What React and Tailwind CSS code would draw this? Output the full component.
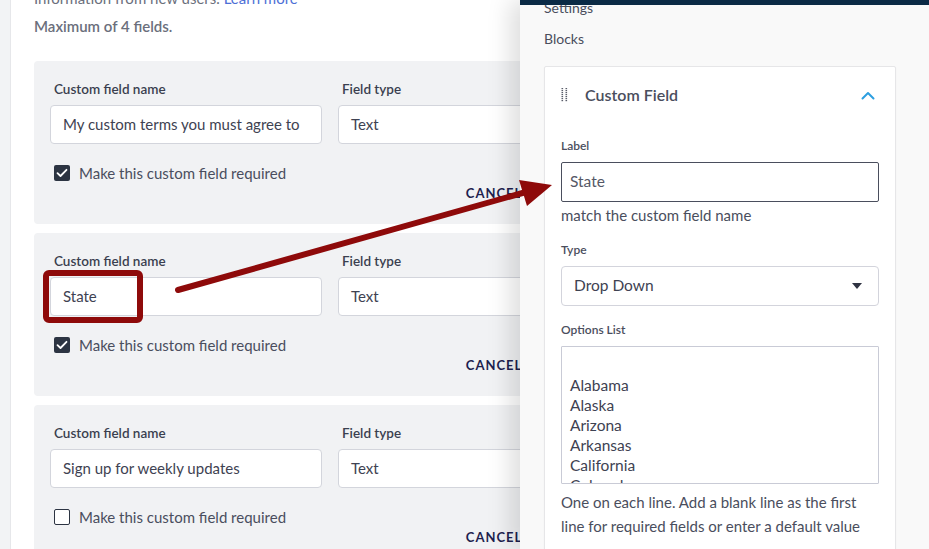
import React from "react";

function Check() {
  return (
    <svg width="12" height="10" viewBox="0 0 12 10" fill="none">
      <path d="M1.5 5.2 L4.5 8 L10.5 1.8" stroke="white" strokeWidth="1.8" strokeLinecap="round" strokeLinejoin="round" />
    </svg>
  );
}

function FieldBox({ name, checked }) {
  return (
    <div className="h-[163px] w-[600px] shrink-0 rounded-[4px] bg-[#f1f2f4] pl-4 pr-5 pt-[20px]">
      <div className="grid grid-cols-[272px_1fr] gap-x-[16px]">
        <div className="pl-1 text-[13.5px] font-semibold leading-4 text-[#3a3f4f]">Custom field name</div>
        <div className="pl-1 text-[13.5px] font-semibold leading-4 text-[#3a3f4f]">Field type</div>
        <div className="mt-2 flex h-[39px] items-center rounded-[4px] border border-[#d3d5dc] bg-white px-[12px] text-[15px] text-[#3e4252]">{name}</div>
        <div className="mt-2 flex h-[39px] items-center rounded-[4px] border border-[#d3d5dc] bg-white px-[12px] text-[15px] text-[#3e4252]">Text</div>
      </div>
      <div className="mt-[17px] flex h-6 items-center gap-[9px] pl-1">
        {checked ? (
          <div className="flex h-4 w-4 items-center justify-center rounded-[2px] bg-[#2c3442]"><Check /></div>
        ) : (
          <div className="h-4 w-4 rounded-[2px] border-[1.5px] border-[#2c3442] bg-white" />
        )}
        <span className="text-[15px] text-[#4a4e5e]">Make this custom field required</span>
      </div>
      <div className="flex items-start justify-end gap-6">
        <span className="text-[13px] font-bold leading-4 tracking-[1px] text-[#1e1f4f]">CANCEL</span>
        <span className="-mt-2 rounded-[4px] bg-[#1e1f4f] px-4 py-2 text-[13px] font-bold leading-4 tracking-[1px] text-white">SAVE</span>
      </div>
    </div>
  );
}

export default function App() {
  return (
    <div className="relative flex h-[549px] w-[929px] overflow-hidden bg-white font-['Lato',sans-serif]">
      {/* Left pane */}
      <div className="flex w-[520px] shrink-0 overflow-hidden bg-[#f2f3f5] pl-[10px]">
        <div className="flex min-w-0 flex-1 flex-col border-l border-[#e6e7ea] bg-white pl-[23px]">
          <div className="-mt-[12px] whitespace-nowrap text-[15px] leading-5 text-[#6b6f7c]">
            Information from new users. <span className="text-[#4d6fd6]">Learn more</span>
          </div>
          <div className="mt-[8px] text-[15px] font-semibold leading-5 text-[#6b6f7c]">Maximum of 4 fields.</div>
          <div className="mt-[25px] flex flex-col gap-[9px]">
            <FieldBox name="My custom terms you must agree to" checked />
            <FieldBox name="State" checked />
            <FieldBox name="Sign up for weekly updates" checked={false} />
          </div>
        </div>
      </div>

      {/* Right panel */}
      <div className="relative z-10 flex w-[409px] shrink-0 flex-col overflow-hidden bg-[#f9f9f9] shadow-[-10px_0_22px_rgba(0,0,0,0.13)]">
        <div className="relative z-10 h-[5px] shrink-0 bg-[#0b2a45]" />
        <div className="-mt-[7px] shrink-0 pl-6 pr-[33px]">
          <div className="text-[14px] leading-5 text-[#4a4e5d]">Settings</div>
          <div className="mt-[11px] text-[14px] leading-5 text-[#4a4e5d]">Blocks</div>
          <div className="mt-[17px] rounded-[2px] border border-[#e6e6e8] bg-white px-4 pb-8 shadow-[0_1px_2px_rgba(0,0,0,0.04)]">
            <div className="flex h-[56px] items-center">
              <svg width="8" height="15" viewBox="0 0 8 15">
                {[0, 1, 2, 3, 4, 5, 6].map((i) => (
                  <g key={i}>
                    <rect x="0.5" y={i * 2} width="1.6" height="1.2" fill="#5a5e6b" />
                    <rect x="4.5" y={i * 2} width="1.6" height="1.2" fill="#5a5e6b" />
                  </g>
                ))}
              </svg>
              <span className="ml-4 text-[16px] font-semibold text-[#4a4e5d]">Custom Field</span>
              <svg className="ml-auto mr-[4px]" width="14" height="9" viewBox="0 0 14 9" fill="none">
                <path d="M1.5 7.5 L7 2 L12.5 7.5" stroke="#2d9fe0" strokeWidth="2" strokeLinecap="round" strokeLinejoin="round" />
              </svg>
            </div>
            <div className="mt-[15px] text-[12px] font-semibold leading-4 text-[#4a4e5d]">Label</div>
            <div className="mt-[8px] flex h-[40px] items-center rounded-[2px] border border-[#4a4e5d] px-2 text-[15.5px] text-[#555866]">State</div>
            <div className="mt-[3px] text-[15px] leading-5 text-[#4a4e5d]">match the custom field name</div>
            <div className="mt-[17px] text-[12px] font-semibold leading-4 text-[#4a4e5d]">Type</div>
            <div className="mt-2 flex h-[40px] items-center rounded-[4px] border border-[#d3d4dc] pl-3 pr-4 text-[15.5px] text-[#3e4252]">
              <span>Drop Down</span>
              <svg className="ml-auto" width="10" height="6" viewBox="0 0 10 6">
                <path d="M0 0 L10 0 L5 6 Z" fill="#2f3342" />
              </svg>
            </div>
            <div className="mt-[16px] text-[12px] font-semibold leading-4 text-[#4a4e5d]">Options List</div>
            <div className="mt-2 h-[138px] overflow-hidden rounded-[1px] border border-[#c9cbd6] px-2 pt-[8px] text-[15.5px] leading-5 text-[#3e4252]">
              <div>&nbsp;</div>
              <div>Alabama</div>
              <div>Alaska</div>
              <div>Arizona</div>
              <div>Arkansas</div>
              <div>California</div>
              <div>Colorado</div>
            </div>
            <div className="mt-[6px] text-[15px] leading-6 text-[#4a4e5d]">
              One on each line. Add a blank line as the first line for required fields or enter a default value
            </div>
          </div>
        </div>
      </div>

      {/* Annotation overlay */}
      <svg className="pointer-events-none absolute inset-0 z-20" width="929" height="549" viewBox="0 0 929 549">
        <rect x="46" y="273" width="94" height="47" rx="3" fill="none" stroke="#8e0a0a" strokeWidth="6" />
        <line x1="178" y1="290" x2="526" y2="192" stroke="#8e0a0a" strokeWidth="6" strokeLinecap="round" />
        <polygon points="552,185 519,180 527,206" fill="#8e0a0a" />
      </svg>
    </div>
  );
}
